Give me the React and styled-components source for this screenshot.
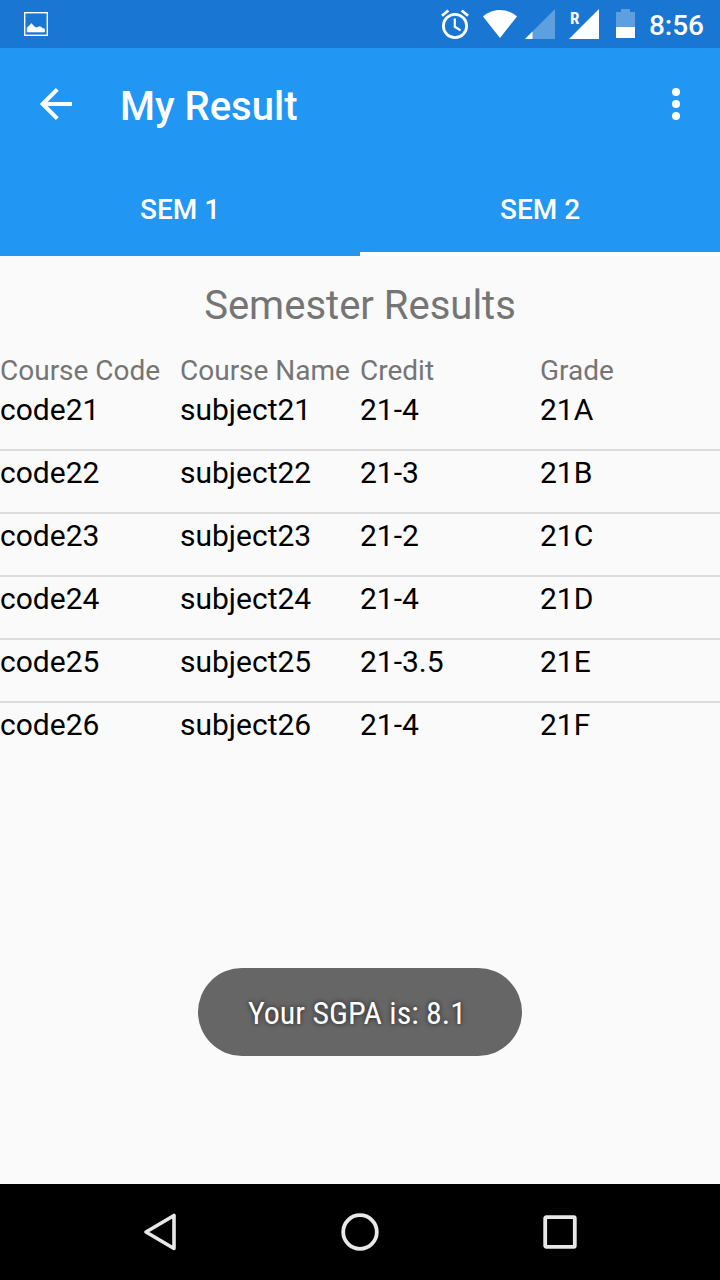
import React, { useState } from "react";
import styled, { createGlobalStyle } from "styled-components";

const GlobalStyle = createGlobalStyle`
  *, *::before, *::after { box-sizing: border-box; }
  body {
    margin: 0;
    background: #fafafa;
    font-family: Roboto, "Noto Sans", sans-serif;
  }
`;

const Screen = styled.div`
  position: relative;
  display: flex;
  flex-direction: column;
  min-height: 100vh;
  background: #fafafa;
`;

const StatusBar = styled.div`
  display: flex;
  align-items: center;
  justify-content: space-between;
  height: 48px;
  padding: 0 16px 0 24px;
  background: #1976d2;
  color: #fff;
`;

const StatusIcons = styled.div`
  display: flex;
  align-items: center;
  gap: 14px;
`;

const Signals = styled.div`
  display: flex;
  align-items: center;
  gap: 8px;
  margin-right: 3px;
`;

const Clock = styled.time`
  font-size: 28px;
  font-weight: 500;
  line-height: 32px;
  padding-top: 4px;
`;

const Icon = styled.svg`
  display: block;
  flex: none;
`;

const Header = styled.header`
  background: #2196f3;
  color: #fff;
`;

const Toolbar = styled.div`
  display: flex;
  align-items: center;
  height: 112px;
  padding: 0 20px 0 32px;
`;

const IconButton = styled.button`
  display: flex;
  align-items: center;
  justify-content: center;
  width: 48px;
  height: 48px;
  padding: 0;
  border: 0;
  background: transparent;
  color: inherit;
  cursor: pointer;
`;

const Title = styled.h1`
  flex: 1;
  margin: 0;
  padding: 6px 0 0 40px;
  font-size: 40px;
  font-weight: 500;
  line-height: 48px;
`;

const Tabs = styled.div`
  display: flex;
`;

const Tab = styled.button`
  flex: 1;
  height: 96px;
  padding: 8px 0 0;
  border: 0;
  border-bottom: 4px solid ${({ $active }) => ($active ? "#fff" : "transparent")};
  background: transparent;
  color: #fff;
  font-family: inherit;
  font-size: 28px;
  font-weight: 500;
  line-height: 32px;
  cursor: pointer;
`;

const Content = styled.main`
  flex: 1;
  padding-top: 26px;
`;

const Heading = styled.h2`
  margin: 0 0 24px;
  color: #757575;
  font-size: 40px;
  font-weight: 400;
  line-height: 48px;
  text-align: center;
`;

const Table = styled.table`
  width: 100%;
  table-layout: fixed;
  border-collapse: separate;
  border-spacing: 0;
`;

const HeadCell = styled.th`
  height: 34px;
  padding: 0;
  color: #757575;
  font-size: 28px;
  font-weight: 400;
  line-height: 32px;
  text-align: left;
  vertical-align: middle;
  white-space: nowrap;
`;

const Row = styled.tr`
  &:not(:last-child) td {
    border-bottom: 2px solid #dcdcdc;
  }
`;

const Cell = styled.td`
  height: 63px;
  padding: 4px 0 0;
  color: #000;
  font-size: 30px;
  line-height: 36px;
  vertical-align: top;
`;

const Toast = styled.div`
  position: absolute;
  bottom: 224px;
  left: 50%;
  width: 324px;
  padding: 25px 50px 23px;
  border-radius: 44px;
  background: #666;
  color: #fff;
  font-family: "Roboto Condensed", Roboto, sans-serif;
  font-size: 32px;
  line-height: 40px;
  text-shadow: 0 0 5px rgba(0, 0, 0, 0.7);
  white-space: nowrap;
  transform: translateX(-50%);
`;

const NavBar = styled.nav`
  display: flex;
  align-items: center;
  justify-content: space-around;
  height: 96px;
  padding: 0 60px;
  background: #000;
  color: #e8e8e8;
`;

const results = {
  1: [
    ["code11", "subject11", "11-4", "11A"],
    ["code12", "subject12", "11-3", "11B"],
    ["code13", "subject13", "11-2", "11C"],
  ],
  2: [
    ["code21", "subject21", "21-4", "21A"],
    ["code22", "subject22", "21-3", "21B"],
    ["code23", "subject23", "21-2", "21C"],
    ["code24", "subject24", "21-4", "21D"],
    ["code25", "subject25", "21-3.5", "21E"],
    ["code26", "subject26", "21-4", "21F"],
  ],
};

const columns = ["Course Code", "Course Name", "Credit", "Grade"];

function PictureIcon() {
  return (
    <Icon width="24" height="24" viewBox="0 0 24 24" aria-hidden="true">
      <rect x="0.7" y="0.7" width="22.6" height="22.6" fill="none" stroke="#fff" strokeWidth="1.4" />
      <path d="M3.200 15.500 5 14 7.500 11.500 9.500 14 12 15.800 16 14.600 18 16 20.600 17v3H3.200z" fill="#fff" stroke="#fff" strokeWidth="0.6" strokeLinejoin="round" />
    </Icon>
  );
}

function AlarmIcon() {
  return (
    <Icon width="28" height="30" viewBox="0 0 28 30" fill="none" stroke="#fff" aria-hidden="true">
      <circle cx="14" cy="17" r="11.6" strokeWidth="2.8" />
      <path d="M13.8 9.5v8.3l5.8 3.6" strokeWidth="2.2" />
      <path d="M1 6.8 7.3 1.5M27 6.8 20.7 1.5" strokeWidth="2.8" />
    </Icon>
  );
}

function WifiIcon() {
  return (
    <Icon width="34" height="28" viewBox="0 0 34 28" aria-hidden="true">
      <path d="M17 28 0 6.4C4.500 2.500 10.500 0 17 0s12.500 2.500 17 6.400z" fill="#fff" />
    </Icon>
  );
}

function WeakSignalIcon() {
  return (
    <Icon width="30" height="30" viewBox="0 0 30 30" aria-hidden="true">
      <path d="M30 0v30H0z" fill="#fff" fillOpacity="0.3" />
      <path d="M7.500 22.500v7.500H0z" fill="#fff" />
    </Icon>
  );
}

const RoamingSignal = styled.div`
  position: relative;
  margin-left: 6px;
`;

const RoamingLabel = styled.span`
  position: absolute;
  top: 0;
  left: 1px;
  font-family: "Roboto Condensed", Roboto, sans-serif;
  font-size: 17px;
  font-weight: 700;
  line-height: 18px;
`;

function BatteryIcon() {
  return (
    <Icon width="19" height="30" viewBox="0 0 19 30" aria-hidden="true">
      <path d="M5 0h9v3h5v15H0V3h5z" fill="#fff" fillOpacity="0.3" />
      <path d="M0 18h19v11H0z" fill="#fff" />
    </Icon>
  );
}

export default function App() {
  const [semester, setSemester] = useState(2);

  return (
    <>
      <GlobalStyle />
      <Screen>
        <StatusBar>
          <PictureIcon />
          <StatusIcons>
            <AlarmIcon />
            <Signals>
              <WifiIcon />
              <WeakSignalIcon />
              <RoamingSignal>
                <Icon width="30" height="30" viewBox="0 0 30 30" aria-hidden="true">
                  <path d="M30 0v30H0z" fill="#fff" />
                </Icon>
                <RoamingLabel>R</RoamingLabel>
              </RoamingSignal>
            </Signals>
            <BatteryIcon />
            <Clock>8:56</Clock>
          </StatusIcons>
        </StatusBar>

        <Header>
          <Toolbar>
            <IconButton aria-label="Back">
              <Icon width="32" height="32" viewBox="0 0 32 32" fill="none" stroke="currentColor" strokeWidth="4" aria-hidden="true">
                <path d="M32 16H3M17.300 1.400 2.700 16l14.600 14.600" />
              </Icon>
            </IconButton>
            <Title>My Result</Title>
            <IconButton aria-label="More options">
              <Icon width="8" height="32" viewBox="0 0 8 32" fill="currentColor" aria-hidden="true">
                <circle cx="4" cy="4" r="4" />
                <circle cx="4" cy="16" r="4" />
                <circle cx="4" cy="28" r="4" />
              </Icon>
            </IconButton>
          </Toolbar>
          <Tabs role="tablist">
            {[1, 2].map((n) => (
              <Tab
                key={n}
                role="tab"
                aria-selected={semester === n}
                $active={semester === n}
                onClick={() => setSemester(n)}
              >
                {`SEM ${n}`}
              </Tab>
            ))}
          </Tabs>
        </Header>

        <Content>
          <Heading>Semester Results</Heading>
          <Table>
            <thead>
              <tr>
                {columns.map((name) => (
                  <HeadCell key={name} scope="col">{name}</HeadCell>
                ))}
              </tr>
            </thead>
            <tbody>
              {results[semester].map((row) => (
                <Row key={row[0]}>
                  {row.map((value, i) => (
                    <Cell key={i}>{value}</Cell>
                  ))}
                </Row>
              ))}
            </tbody>
          </Table>
        </Content>

        <Toast role="status">Your SGPA is: 8.1</Toast>

        <NavBar aria-label="System">
          <IconButton aria-label="Back">
            <Icon width="34" height="40" viewBox="0 0 34 40" fill="none" stroke="currentColor" strokeWidth="3.600" strokeLinejoin="round" aria-hidden="true">
              <path d="M31 3.500v33L3 20z" />
            </Icon>
          </IconButton>
          <IconButton aria-label="Home">
            <Icon width="38" height="38" viewBox="0 0 38 38" fill="none" stroke="currentColor" strokeWidth="3.800" aria-hidden="true">
              <circle cx="19" cy="19" r="16.800" />
            </Icon>
          </IconButton>
          <IconButton aria-label="Recent apps">
            <Icon width="34" height="34" viewBox="0 0 34 34" fill="none" stroke="currentColor" strokeWidth="3.800" aria-hidden="true">
              <rect x="2.200" y="2.200" width="29.600" height="29.600" rx="1" />
            </Icon>
          </IconButton>
        </NavBar>
      </Screen>
    </>
  );
}
